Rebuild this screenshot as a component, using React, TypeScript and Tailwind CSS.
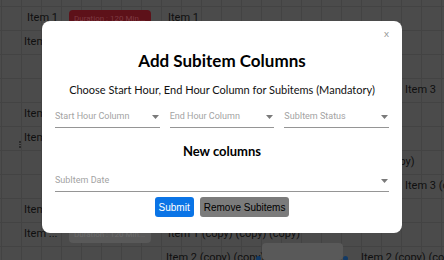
import { ReactNode } from "react";

function Row({ children }: { children?: ReactNode }) {
  return <div className="relative h-6 shrink-0">{children}</div>;
}

// gantt canvas items: their x is the data
function Label({ x, children }: { x: number; children: ReactNode }) {
  return (
    <span
      className="absolute top-0 h-6 leading-6 text-[11px] text-[#0f0f0f] whitespace-nowrap"
      style={{ left: x }}
    >
      {children}
    </span>
  );
}

function Bar({ x, red }: { x: number; red?: boolean }) {
  return (
    <span
      className={
        "absolute top-1 h-[17px] w-[82px] rounded-[4px] px-[5px] text-[8px] leading-[17px] whitespace-nowrap overflow-hidden " +
        (red ? "bg-[#5d1119] text-[#7e3a42]" : "bg-[#595959] text-[#6b6b6b]")
      }
      style={{ left: x }}
    >
      Duration : 120 Min...
    </span>
  );
}

function Select({ label }: { label: string }) {
  return (
    <div className="flex h-[21px] items-center justify-between border-b border-[#959595] pr-[1px]">
      <span className="text-[9px] text-[#a3a3a3]">{label}</span>
      <svg width="7" height="4" viewBox="0 0 7 4">
        <path d="M0 0h7L3.5 4z" fill="#7a7a7a" />
      </svg>
    </div>
  );
}

export default function App() {
  return (
    <div className="relative h-[260px] w-[444px] overflow-hidden bg-[#4b4b4b] font-['Roboto',sans-serif] bg-[linear-gradient(to_right,#434343_1px,transparent_1px),linear-gradient(to_bottom,#434343_1px,transparent_1px)] bg-[size:20px_24px] bg-[position:1px_6px]">
      <div className="flex flex-col pt-[6px]">
        <Row>
          <Label x={27}>Item 1</Label>
          <Bar x={69} red />
          <Label x={168}>Item 1</Label>
        </Row>
        <Row>
          <Label x={24}>Item</Label>
        </Row>
        <Row />
        <Row>
          <Label x={405}>Item 3</Label>
        </Row>
        <Row>
          <Label x={24}>Item</Label>
        </Row>
        <Row>
          <span className="absolute left-[19px] top-[15px] flex flex-col gap-[1px]">
            <i className="h-[1.5px] w-[1.5px] bg-[#2a2a2a]" />
            <i className="h-[1.5px] w-[1.5px] bg-[#2a2a2a]" />
            <i className="h-[1.5px] w-[1.5px] bg-[#2a2a2a]" />
          </span>
          <Label x={24}>Item</Label>
        </Row>
        <Row>
          <Label x={350}>(copy) (copy)</Label>
        </Row>
        <Row>
          <Label x={405}>Item 3 (co</Label>
        </Row>
        <Row>
          <Label x={24}>Item</Label>
        </Row>
        <Row>
          <Label x={24}>Item ...</Label>
          <Bar x={69} />
          <Label x={168}>Item 1 (copy) (copy) (copy)</Label>
        </Row>
        <Row>
          <Label x={166}>Item 2 (copy) (copy)</Label>
          <span className="absolute left-[262px] top-[-3px] h-[17px] w-[81px] rounded-[4px] bg-[#595959]" />
          <span className="absolute left-[256px] top-[10px] h-[5px] w-[5px] rounded-full bg-[#123a66]" />
          <span className="absolute left-[343px] top-[10px] h-[5px] w-[5px] rounded-full bg-[#123a66]" />
          <Label x={361}>Item 2 (copy) (copy)</Label>
        </Row>
      </div>

      <div className="absolute inset-0 flex justify-center pt-[21px]">
        <div className="relative h-[212px] w-[360px] rounded-lg bg-white px-[13px] font-['Lato',sans-serif]">
          <button className="absolute right-[13px] top-[5px] text-[10px] leading-[14px] text-[#9a9a9a]">x</button>
          <h2 className="mt-[30px] text-center text-[17px] font-bold leading-5 text-black">
            Add Subitem Columns
          </h2>
          <p className="mt-3 text-center text-[11px] leading-[14px] text-[#111]">
            Choose Start Hour, End Hour Column for Subitems (Mandatory)
          </p>
          <div className="mt-[10px] grid grid-cols-3 gap-[10px] font-['Roboto',sans-serif]">
            <Select label="Start Hour Column" />
            <Select label="End Hour Column" />
            <Select label="SubItem Status" />
          </div>
          <h3 className="mt-[15px] text-center text-[13px] font-bold leading-4 text-black">New columns</h3>
          <div className="mt-3 font-['Roboto',sans-serif]">
            <Select label="SubItem Date" />
          </div>
          <div className="mt-[5px] flex justify-center gap-1.5 font-['Liberation_Sans',sans-serif] text-[10px]">
            <button className="h-5 rounded-[3px] bg-[#0a74e6] px-1 text-white">Submit</button>
            <button className="h-5 rounded-[3px] bg-[#7b7b7b] px-1 text-black">Remove Subitems</button>
          </div>
        </div>
      </div>
    </div>
  );
}
